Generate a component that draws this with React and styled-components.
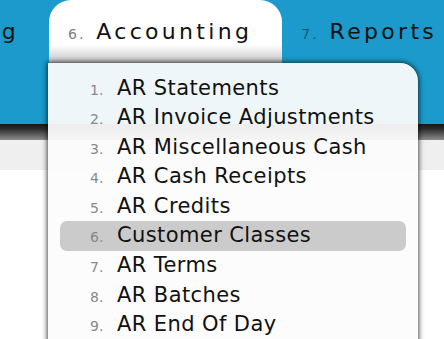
import React from 'react';
import styled, { createGlobalStyle } from 'styled-components';

const Global = createGlobalStyle`
  html, body { margin: 0; padding: 0; background: #fff; }
  body { font-family: "DejaVu Sans", Verdana, sans-serif; }
`;

const Page = styled.div`
  width: 444px;
  height: 339px;
  overflow: hidden;
  background: #fff;
  display: flex;
  flex-direction: column;
`;

const Header = styled.header`
  flex: none;
  height: 124px;
  background: #1b9acb;
  display: flex;
  align-items: flex-start;
  position: relative;
  z-index: 2;
`;

const ScrolledOff = styled.div`
  flex: none;
  width: 49px;
  display: flex;
  justify-content: flex-end;
  overflow: hidden;
`;

const Tab = styled.div`
  position: relative;
  flex: none;
  height: 63px;
  box-sizing: border-box;
  padding: 19px 30px 0 19px;
  display: flex;
  align-items: baseline;
  border-radius: 22px 22px 0 0;
  background: ${(p) =>
    p.$active
      ? 'linear-gradient(#fff 0, #fff 45px, #e4e4e4 53px, #c0c0c0 63px)'
      : 'transparent'};
`;

const TabNum = styled.span`
  font-size: 14px;
  letter-spacing: 2px;
  margin-right: 11px;
  color: ${(p) => (p.$active ? '#808080' : 'rgba(0,0,0,0.42)')};
`;

const TabLabel = styled.span`
  font-size: 22px;
  letter-spacing: 3.3px;
  color: #111;
  white-space: nowrap;
`;

const Dropdown = styled.ul`
  position: absolute;
  top: 63px;
  left: -1px;
  width: 370px;
  box-sizing: border-box;
  margin: 0;
  padding: 10.5px 12px 14px;
  list-style: none;
  background: rgba(252, 252, 252, 0.94);
  border-radius: 0 18px 0 0;
  box-shadow: 0 0 5px 1px rgba(0, 0, 0, 0.7);
`;

const Item = styled.li`
  display: flex;
  align-items: baseline;
  height: 29.6px;
  line-height: 29.6px;
  padding-left: 30px;
  border-radius: 7px;
  background: ${(p) => (p.$selected ? '#cbcbcb' : 'transparent')};
`;

const ItemNum = styled.span`
  flex: none;
  width: 27px;
  font-size: 14px;
  color: #888;
`;

const ItemLabel = styled.span`
  font-size: 21px;
  letter-spacing: 0.4px;
  color: #111;
  white-space: nowrap;
`;

const Shade = styled.div`
  flex: none;
  height: 16px;
  background: linear-gradient(#161616 0, #2c2c2c 30%, #555 60%, #8c8c8c 100%);
`;

const SubBar = styled.div`
  flex: none;
  height: 30px;
  background: #efefef;
`;

const Content = styled.main`
  flex: 1;
  background: #fff;
`;

const items = [
  'AR Statements',
  'AR Invoice Adjustments',
  'AR Miscellaneous Cash',
  'AR Cash Receipts',
  'AR Credits',
  'Customer Classes',
  'AR Terms',
  'AR Batches',
  'AR End Of Day',
];

export default function App() {
  return (
    <>
      <Global />
      <Page>
        <Header>
          <ScrolledOff>
            <Tab>
              <TabNum>5.</TabNum>
              <TabLabel>Purchasing</TabLabel>
            </Tab>
          </ScrolledOff>
          <Tab $active>
            <TabNum $active>6.</TabNum>
            <TabLabel>Accounting</TabLabel>
            <Dropdown>
              {items.map((label, i) => (
                <Item key={label} $selected={i === 5}>
                  <ItemNum>{i + 1}.</ItemNum>
                  <ItemLabel>{label}</ItemLabel>
                </Item>
              ))}
            </Dropdown>
          </Tab>
          <Tab>
            <TabNum>7.</TabNum>
            <TabLabel>Reports</TabLabel>
          </Tab>
        </Header>
        <Shade />
        <SubBar />
        <Content />
      </Page>
    </>
  );
}
